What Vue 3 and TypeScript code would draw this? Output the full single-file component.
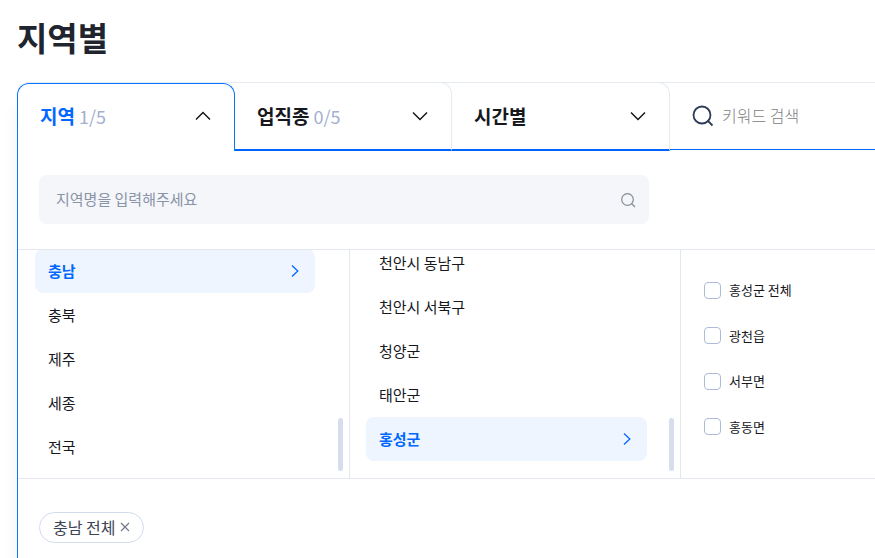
<script setup lang="ts">
import { ref } from 'vue'

interface Tab {
  id: string
  label: string
  count?: string
}

const tabs: Tab[] = [
  { id: 'region', label: '지역', count: '1/5' },
  { id: 'job', label: '업직종', count: '0/5' },
  { id: 'time', label: '시간별' },
]
const provinces: string[] = ['충남', '충북', '제주', '세종', '전국']
const districts: string[] = ['천안시 동남구', '천안시 서북구', '청양군', '태안군', '홍성군']
const towns: string[] = ['홍성군 전체', '광천읍', '서부면', '홍동면']

const activeTab = ref('region')
const province = ref('충남')
const district = ref('홍성군')
const checkedTowns = ref<string[]>([])
const selected = ref<string[]>(['충남 전체'])
const keyword = ref('')
const regionName = ref('')

function removeSelected(name: string): void {
  selected.value = selected.value.filter((item) => item !== name)
}
</script>

<template>
  <main class="page">
    <h1 class="title">지역별</h1>

    <section class="filter">
      <div class="tabs">
        <button
          v-for="tab in tabs"
          :key="tab.id"
          type="button"
          class="tab"
          :class="{ active: tab.id === activeTab }"
          :aria-expanded="tab.id === activeTab"
          @click="activeTab = tab.id"
        >
          <span class="tab-text">
            <strong>{{ tab.label }}</strong>
            <span v-if="tab.count" class="count">{{ tab.count }}</span>
          </span>
          <svg class="chevron" viewBox="0 0 16 10" aria-hidden="true">
            <path :d="tab.id === activeTab ? 'M1 8.5 8 1.5 15 8.5' : 'M1 1.5 8 8.5 15 1.5'" />
          </svg>
        </button>
        <label class="keyword">
          <svg class="keyword-icon" viewBox="0 0 22 22" aria-hidden="true">
            <circle cx="10" cy="10" r="8.5" />
            <path d="M15.5 15.5 20.5 20.5" />
          </svg>
          <input v-model="keyword" type="text" placeholder="키워드 검색" aria-label="키워드 검색" />
        </label>
      </div>

      <div class="panel">
        <div class="region-search">
          <label class="search-box">
            <input v-model="regionName" type="text" placeholder="지역명을 입력해주세요" aria-label="지역명" />
            <svg class="search-icon" viewBox="0 0 16 16" aria-hidden="true">
              <circle cx="7.5" cy="7.5" r="5.8" />
              <path d="M11.5 11.5 15 15" />
            </svg>
          </label>
        </div>

        <div class="columns">
          <div class="column provinces">
            <ul class="list">
              <li v-for="name in provinces" :key="name">
                <button type="button" class="item" :class="{ current: name === province }" @click="province = name">
                  {{ name }}
                  <svg v-if="name === province" class="arrow" viewBox="0 0 8 12" aria-hidden="true">
                    <path d="M1 .5 6.8 6 1 11.5" />
                  </svg>
                </button>
              </li>
            </ul>
            <span class="thumb"></span>
          </div>

          <div class="column districts">
            <ul class="list">
              <li v-for="name in districts" :key="name">
                <button type="button" class="item" :class="{ current: name === district }" @click="district = name">
                  {{ name }}
                  <svg v-if="name === district" class="arrow" viewBox="0 0 8 12" aria-hidden="true">
                    <path d="M1 .5 6.8 6 1 11.5" />
                  </svg>
                </button>
              </li>
            </ul>
            <span class="thumb"></span>
          </div>

          <div class="towns">
            <label v-for="name in towns" :key="name" class="town">
              <input v-model="checkedTowns" type="checkbox" :value="name" />
              <span>{{ name }}</span>
            </label>
          </div>
        </div>

        <div class="chips">
          <span v-for="name in selected" :key="name" class="chip">
            {{ name }}
            <button type="button" :aria-label="name + ' 삭제'" @click="removeSelected(name)">
              <svg viewBox="0 0 10 10" aria-hidden="true">
                <path d="M1 1 9 9M9 1 1 9" />
              </svg>
            </button>
          </span>
        </div>
      </div>
    </section>
  </main>
</template>

<style>
body {
  background: #fff;
}
</style>

<style scoped>
* {
  box-sizing: border-box;
}

.page {
  display: flex;
  flex-direction: column;
  min-height: 100vh;
  padding: 13px 0 0 17px;
  overflow: hidden;
  color: #16181d;
  font-family: 'Noto Sans CJK KR', 'Noto Sans', sans-serif;
}

button,
input {
  font: inherit;
  color: inherit;
}

button {
  margin: 0;
  border: 0;
  background: none;
  cursor: pointer;
}

svg {
  display: block;
  flex: none;
  fill: none;
  stroke: currentColor;
}

.title {
  margin: 0 0 21px;
  color: #20242f;
  font-size: 33px;
  line-height: 48px;
  font-weight: 700;
}

.filter {
  display: flex;
  flex: 1;
  flex-direction: column;
  border-top-left-radius: 12px;
  background: #fff;
  box-shadow: 0 22px 18px rgba(0, 0, 0, 0.05);
}

.tabs {
  display: grid;
  grid-template-columns: 218px 217px 218px 1fr;
  height: 69px;
  border-top: 1px solid #e6eaf2;
  border-top-left-radius: 12px;
}

.tab {
  display: flex;
  align-items: center;
  justify-content: space-between;
  margin-top: -1px;
  padding: 0 23px 0 22px;
  border: 1px solid #e6eaf2;
  border-bottom: 2px solid #0064ff;
  border-left: 0;
  border-top-right-radius: 12px;
  font-size: 19px;
  line-height: 28px;
}

.tab.active {
  margin-top: 0;
  padding: 0 23px 3px 22px;
  border: 1px solid #0a74ff;
  border-bottom: 0;
  border-radius: 12px 12px 0 0;
}

.tab strong {
  font-weight: 700;
}

.tab.active strong {
  color: #0068ff;
}

.tab-text {
  display: flex;
  gap: 4px;
}

.count {
  color: #a3b0cf;
  font-size: 18px;
  font-weight: 400;
}

.chevron {
  width: 16px;
  height: 10px;
  color: #111;
  stroke-width: 1.4;
}

.keyword {
  display: flex;
  align-items: center;
  gap: 8px;
  min-width: 0;
  height: 67px;
  padding-left: 22px;
  border-bottom: 1px solid #0068ff;
}

.keyword-icon {
  width: 22px;
  height: 22px;
  color: #2c3a58;
  stroke-width: 1.8;
}

input[type='text'] {
  flex: 1;
  min-width: 0;
  padding: 0 0 2px;
  border: 0;
  outline: 0;
  background: none;
}

.keyword input {
  font-size: 16px;
  line-height: 24px;
  font-weight: 300;
}

.keyword input::placeholder {
  color: #808080;
}

.panel {
  display: flex;
  flex: 1;
  flex-direction: column;
  border-left: 1px solid #0a74ff;
}

.region-search {
  padding: 24px 21px 25px;
}

.search-box {
  display: flex;
  align-items: center;
  max-width: 610px;
  height: 49px;
  padding: 0 13px 0 17px;
  border-radius: 8px;
  background: #f4f6fa;
}

.search-box input {
  font-size: 15px;
  line-height: 24px;
}

.search-box input::placeholder {
  color: #8b93a7;
}

.search-icon {
  width: 16px;
  height: 16px;
  color: #858b98;
  stroke-width: 1.2;
}

.columns {
  display: grid;
  grid-template-columns: 332px 331px 1fr;
  height: 230px;
  border: solid #e2e7f0;
  border-width: 1px 0;
}

.column {
  position: relative;
  display: flex;
  flex-direction: column;
  justify-content: flex-end;
  min-height: 0;
  overflow: hidden;
  border-right: 1px solid #e2e7f0;
}

.provinces {
  padding: 0 34px 9px 17px;
}

.districts {
  padding: 0 33px 17px 16px;
}

.list {
  margin: 0;
  padding: 0;
  list-style: none;
}

.item {
  display: flex;
  align-items: center;
  justify-content: space-between;
  width: 100%;
  height: 44px;
  padding: 0 16px 0 13px;
  border-radius: 8px;
  font-size: 15px;
  line-height: 24px;
  text-align: left;
}

.item.current {
  background: #eef5ff;
  color: #0068ff;
  font-weight: 700;
}

.arrow {
  width: 8px;
  height: 12px;
  stroke-width: 1.3;
}

.thumb {
  position: absolute;
  right: 6px;
  bottom: 7px;
  width: 5px;
  height: 53px;
  border-radius: 3px;
  background: #d6deee;
}

.towns {
  display: flex;
  flex-direction: column;
  justify-content: space-between;
  padding: 31px 20px 42px 23px;
}

.town {
  display: flex;
  align-items: center;
  gap: 8px;
  font-size: 13px;
  line-height: 18px;
}

.town input {
  flex: none;
  appearance: none;
  width: 17px;
  height: 17px;
  margin: 0;
  border: 1px solid #aebbd8;
  border-radius: 4px;
  background: #fff;
}

.town input:checked {
  border-color: #0068ff;
  background: #0068ff;
}

.chips {
  display: flex;
  flex: 1;
  flex-wrap: wrap;
  align-items: flex-start;
  gap: 8px;
  padding: 33px 21px 14px;
}

.chip {
  display: flex;
  align-items: center;
  gap: 5px;
  height: 31px;
  padding: 0 13px 1px;
  border: 1px solid #d3dcec;
  border-radius: 16px;
  color: #3d4454;
  font-size: 16px;
  line-height: 24px;
}

.chip button {
  padding: 0;
  color: #6d7588;
}

.chip svg {
  width: 10px;
  height: 10px;
  stroke-width: 1.1;
}
</style>
